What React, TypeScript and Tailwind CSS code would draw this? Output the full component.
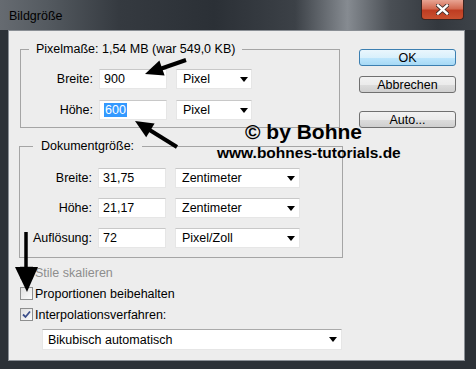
import React from "react";

function Arrow() {
  return (
    <svg width="8" height="5" viewBox="0 0 8 5" className="shrink-0">
      <path d="M0 0H8L4 5Z" fill="#000" />
    </svg>
  );
}

function Input({ children }: { children: React.ReactNode }) {
  return (
    <div className="flex h-[20px] w-[68px] items-center border border-[#e6e6e6] border-t-[#c8c8c8] bg-white pl-[4px] text-[12.5px] leading-[14px] text-black">
      {children}
    </div>
  );
}

function Select({ text, wide }: { text: string; wide?: boolean }) {
  return (
    <div
      className={
        wide
          ? "flex h-[20px] w-[125px] items-center justify-between border border-[#e6e6e6] border-t-[#c8c8c8] bg-white pl-[6px] pr-[4px] text-[12.5px] leading-[14px] text-black"
          : "flex h-[20px] w-[76px] items-center justify-between border border-[#e6e6e6] border-t-[#c8c8c8] bg-white pl-[6px] pr-[3px] text-[12.5px] leading-[14px] text-black"
      }
    >
      <span>{text}</span>
      <Arrow />
    </div>
  );
}

function Row({ label, value, unit, wide }: { label: string; value: React.ReactNode; unit: string; wide?: boolean }) {
  return (
    <div className="flex h-[20px] items-center">
      <div className="w-[73px] pr-[1px] text-right text-[12.5px] leading-[14px] text-black">{label}</div>
      <div className="ml-[5px]">
        <Input>{value}</Input>
      </div>
      <div className="ml-[9px]">
        <Select text={unit} wide={wide} />
      </div>
    </div>
  );
}

function CheckBox({ checked, disabled }: { checked?: boolean; disabled?: boolean }) {
  return (
    <div
      className={
        disabled
          ? "flex h-[13px] w-[13px] items-center justify-center border border-[#b5b5b5] bg-[#f2f2f2]"
          : "flex h-[13px] w-[13px] items-center justify-center border border-[#8e8f8f] bg-[linear-gradient(135deg,#e0e0e0,#fbfbfb)]"
      }
    >
      {checked && (
        <svg width="9" height="9" viewBox="0 0 9 9">
          <path d="M1 4.5L3.5 7L8 1.5" stroke="#3c4f8a" strokeWidth="1.8" fill="none" />
        </svg>
      )}
    </div>
  );
}

function Button({ label, primary }: { label: string; primary?: boolean }) {
  return (
    <div
      className={
        primary
          ? "flex h-[17px] w-[97px] items-center justify-center rounded-[3px] border border-[#3c7fb1] bg-[linear-gradient(180deg,#eaf6fd_0%,#d9f0fc_50%,#bee6fd_51%,#a7d9f5_100%)] text-[12.5px] leading-[14px] text-black"
          : "flex h-[17px] w-[97px] items-center justify-center rounded-[3px] border border-[#707070] bg-[linear-gradient(180deg,#f2f2f2_0%,#ebebeb_50%,#dddddd_51%,#cfcfcf_100%)] text-[12.5px] leading-[14px] text-black"
      }
    >
      {label}
    </div>
  );
}

export default function App() {
  return (
    <div className="relative h-[369px] w-[476px] overflow-hidden bg-[#2c3137] font-['Liberation_Sans',Arial,sans-serif]">
      {/* title bar */}
      <div className="flex h-[30px] items-start justify-between bg-[linear-gradient(90deg,#666b71_0%,#545a60_10%,#353a40_25%,#2b3036_45%,#3c4147_62%,#868b91_73%,#4a4f55_82%,#33383e_92%,#3d4248_100%)]">
        <div className="ml-[9px] mt-[9px] text-[12.5px] leading-[14px] text-black">Bildgröße</div>
        <div className="mr-[12px] flex h-[20px] w-[43px] items-center justify-center rounded-b-[4px] border border-t-0 border-[#3b2420] bg-[linear-gradient(180deg,#e8a493_0%,#d26a52_45%,#bf3d22_55%,#c9502f_100%)]">
          <svg width="13" height="11" viewBox="0 0 13 11">
            <path d="M2 1.5L11 9.5M11 1.5L2 9.5" stroke="#3a2a28" strokeWidth="4" strokeLinecap="square" />
            <path d="M2 1.5L11 9.5M11 1.5L2 9.5" stroke="#ffffff" strokeWidth="2.4" strokeLinecap="square" />
          </svg>
        </div>
      </div>

      {/* body */}
      <div className="ml-[8px] flex h-[331px] w-[457px] border border-[#8a8f95] bg-[#ededed]">
        <div className="relative flex w-[346px] flex-col pl-[10px] pt-[11px]">
          {/* Pixelmaße */}
          <fieldset className="ml-[1px] w-[320px] border border-[#a5a5a5] pb-[7px]">
            <legend className="ml-[8px] px-[7px] text-[12.5px] leading-[14px] text-black">Pixelmaße: 1,54 MB (war 549,0 KB)</legend>
            <div className="flex flex-col gap-[11px] pt-[13px]">
              <Row label="Breite:" value="900" unit="Pixel" />
              <Row
                label="Höhe:"
                value={<span className="bg-[#3399ff] px-[1px] text-white">600</span>}
                unit="Pixel"
              />
            </div>
          </fieldset>

          {/* Dokumentgröße */}
          <fieldset className="mt-[11px] w-[324px] border border-[#a5a5a5] pb-[9px]">
            <legend className="ml-[13px] px-[8px] text-[12.5px] leading-[14px] text-black">Dokumentgröße:</legend>
            <div className="flex flex-col gap-[10px] pt-[15px]">
              <Row label="Breite:" value="31,75" unit="Zentimeter" wide />
              <Row label="Höhe:" value="21,17" unit="Zentimeter" wide />
              <Row label="Auflösung:" value="72" unit="Pixel/Zoll" wide />
            </div>
          </fieldset>

          {/* checkboxes */}
          <div className="ml-[1px] mt-[4px] flex flex-col">
            <div className="flex h-[21px] items-center gap-[2px] text-[12.5px] leading-[14px] text-[#8d8d8d]">
              <CheckBox disabled />
              <span>Stile skalieren</span>
            </div>
            <div className="flex h-[21px] items-center gap-[2px] text-[12.5px] leading-[14px] text-black">
              <CheckBox />
              <span>Proportionen beibehalten</span>
            </div>
            <div className="flex h-[21px] items-center gap-[2px] text-[12.5px] leading-[14px] text-black">
              <CheckBox checked />
              <span>Interpolationsverfahren:</span>
            </div>
          </div>
          <div className="ml-[23px] mt-[4px] flex h-[21px] w-[300px] items-center justify-between border border-[#e6e6e6] border-t-[#aaaaaa] bg-white pl-[5px] pr-[4px] text-[12.5px] leading-[14px] text-black">
            <span>Bikubisch automatisch</span>
            <Arrow />
          </div>
        </div>

        {/* buttons */}
        <div className="flex flex-col pl-[4px] pt-[18px]">
          <Button label="OK" primary />
          <div className="mt-[10px]">
            <Button label="Abbrechen" />
          </div>
          <div className="mt-[18px]">
            <Button label="Auto..." />
          </div>
        </div>
      </div>

      {/* watermark */}
      <div className="pointer-events-none absolute left-[245px] top-[121px] text-[21px] font-bold leading-[21px] text-black">© by Bohne</div>
      <div className="pointer-events-none absolute left-[217px] top-[145px] text-[15.5px] font-bold leading-[16px] text-black">www.bohnes-tutorials.de</div>

      {/* arrows */}
      <svg className="pointer-events-none absolute left-0 top-0" width="476" height="369" viewBox="0 0 476 369">
        <line x1="186" y1="60" x2="160" y2="69" stroke="#000" strokeWidth="4" />
        <polygon points="145,74 164.6,75.6 159.4,60.6" fill="#000" />
        <line x1="177" y1="147" x2="148" y2="129" stroke="#000" strokeWidth="4" />
        <polygon points="135,121 154.6,123.6 146.2,137.2" fill="#000" />
        <line x1="26" y1="232" x2="26" y2="270" stroke="#000" strokeWidth="3.5" />
        <polygon points="15,267 38,267 27,292" fill="#000" />
      </svg>
    </div>
  );
}
